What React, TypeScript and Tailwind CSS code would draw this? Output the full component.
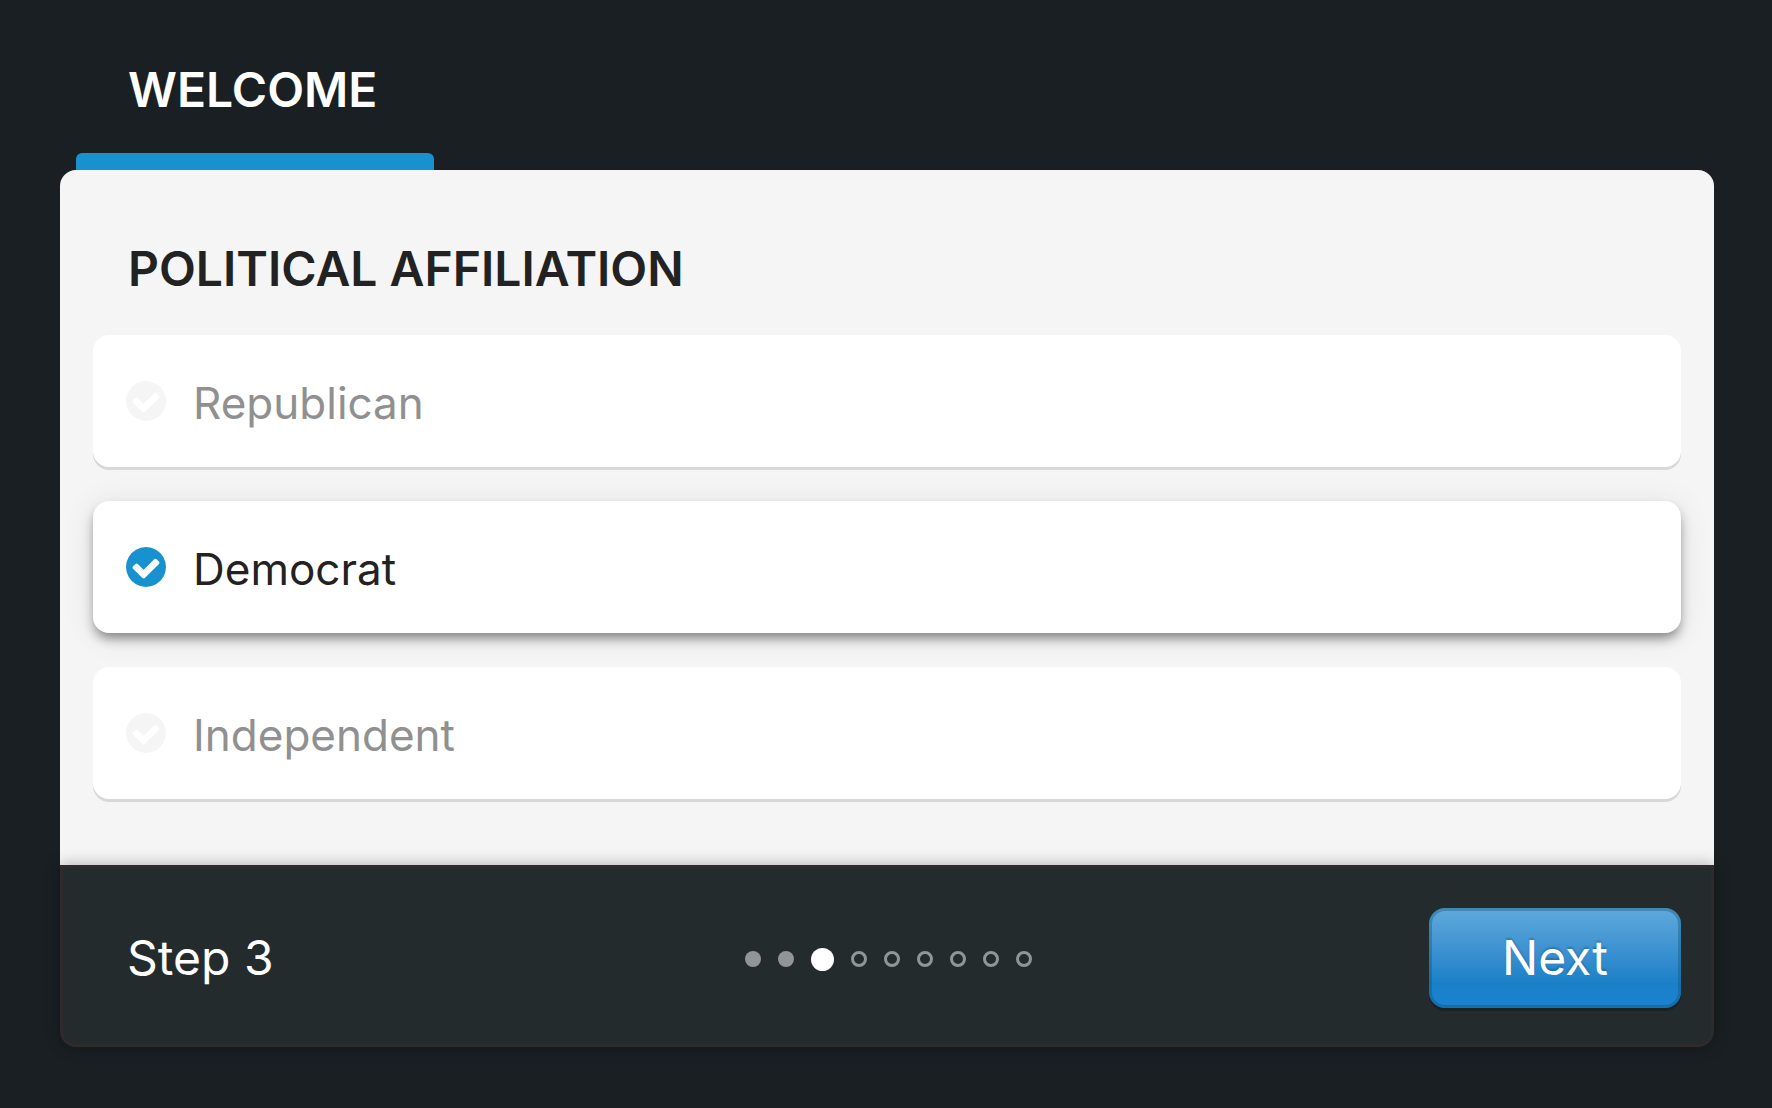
import { useState } from "react";

const options = ["Republican", "Democrat", "Independent"];
const steps = [1, 2, 3, 4, 5, 6, 7, 8, 9];
const currentStep = 3;

function CheckCircle({ active }: { active: boolean }) {
    return (
        <svg viewBox="128 128 1536 1536" className={active ? "size-10 fill-[#1891cf]" : "size-10 fill-[#f5f5f5]"} aria-hidden="true">
            <path d="M1412 734q0-28-18-46l-91-90q-19-19-45-19t-45 19l-408 407-226-226q-19-19-45-19t-45 19l-91 90q-18 18-18 46 0 27 18 45l362 362q19 19 45 19 27 0 46-19l543-543q18-18 18-45zm252 162q0 209-103 385.5t-279.5 279.5-385.5 103-385.5-103-279.5-279.5-103-385.5 103-385.5 279.5-279.5 385.5-103 385.5 103 279.5 279.5 103 385.5z" />
        </svg>
    );
}

function StepDot({ step }: { step: number }) {
    if (step === currentStep) {
        return <li className="size-[23px] rounded-full bg-white" />;
    }
    if (step < currentStep) {
        return <li className="size-4 rounded-full bg-[#929595]" />;
    }
    return <li className="size-4 rounded-full border-3 border-[#929595]" />;
}

export default function App() {
    const [selected, setSelected] = useState("Democrat");

    return (
        <div className="min-h-screen bg-[#1a1f23] pr-[58px] pb-15 pl-[60px] font-['Inter',sans-serif] text-5xl">
            <header className="flex px-4">
                <div className="w-[358px]">
                    <h1 className="px-[52px] pt-[66px] pb-[39px] font-semibold text-white">WELCOME</h1>
                    <div className="h-[17px] rounded-t-md bg-[#1891cf]" />
                </div>
            </header>

            <main>
                <form onSubmit={(e) => e.preventDefault()}>
                    <fieldset className="rounded-t-2xl bg-[#f5f5f5] px-[33px] pt-[75px] pb-[66px]">
                        <h2 id="question" className="mb-[42px] px-[35px] font-semibold text-[#222]">POLITICAL AFFILIATION</h2>
                        <div role="radiogroup" aria-labelledby="question" className="flex flex-col gap-[34px]">
                            {options.map((option) => {
                                const active = option === selected;
                                return (
                                    <label
                                        key={option}
                                        className={
                                            active
                                                ? "flex h-[132px] cursor-pointer items-center gap-[27px] rounded-2xl bg-white px-[33px] text-[44px] text-[#222] shadow-[0_7px_12px_-2px_rgba(0,0,0,0.45),0_3px_32px_rgba(0,0,0,0.09)]"
                                                : "flex h-[132px] cursor-pointer items-center gap-[27px] rounded-2xl bg-white px-[33px] text-[44px] text-[#909090] shadow-[0_3px_0_#d8d8d8]"
                                        }
                                    >
                                        <input
                                            type="radio"
                                            name="affiliation"
                                            value={option}
                                            checked={active}
                                            onChange={() => setSelected(option)}
                                            className="sr-only"
                                        />
                                        <CheckCircle active={active} />
                                        <span className="pt-1">{option}</span>
                                    </label>
                                );
                            })}
                        </div>
                    </fieldset>

                    <footer className="grid grid-cols-3 items-center rounded-b-2xl border-3 border-[#2d2b2b] bg-[#242b2d] px-[30px] pt-10 pb-9 shadow-[0_0_16px_rgba(0,0,0,0.3)]">
                        <p className="pl-[34px] text-white">Step 3</p>
                        <ol className="flex items-center justify-center gap-[17px] pt-0.5 pl-1">
                            {steps.map((step) => (
                                <StepDot key={step} step={step} />
                            ))}
                        </ol>
                        <button
                            type="submit"
                            className="h-[100px] w-[252px] cursor-pointer justify-self-end rounded-2xl bg-linear-to-b from-[#5fa9db] via-[#1980c8] via-75% to-[#1b82d0] text-white shadow-[inset_0_0_0_3px_rgba(10,80,110,0.35),0_3px_0_rgba(0,0,0,0.25)] text-shadow-[0_-2px_2px_rgba(0,0,0,0.2)]"
                        >
                            Next
                        </button>
                    </footer>
                </form>
            </main>
        </div>
    );
}
